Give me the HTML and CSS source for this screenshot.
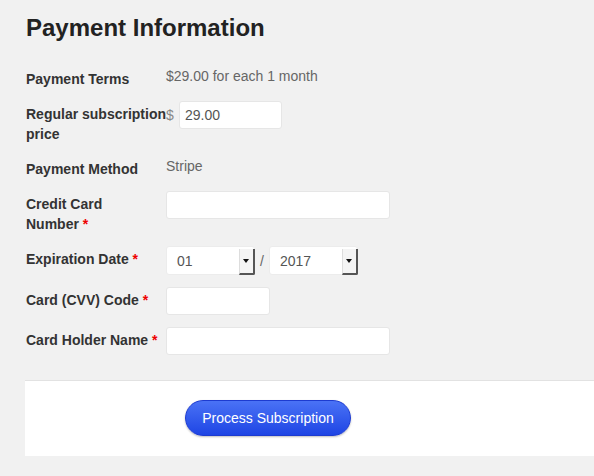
FILE: index.html
```html
<!DOCTYPE html>
<html lang="en">
<head>
    <meta charset="UTF-8">
    <title>Payment Information</title>
    <link rel="stylesheet" href="styles.css">
</head>
<body>
    <div class="page">
        <h2>Payment Information</h2>

        <!-- Payment fields -->
        <div class="row">
            <div class="label">Payment Terms</div>
            <div class="value">$29.00 for each 1 month</div>
        </div>

        <div class="row">
            <div class="label">Regular&nbsp;subscription price</div>
            <div class="field">
                <span class="currency">$</span>
                <input type="text" class="input price" value="29.00">
            </div>
        </div>

        <div class="row">
            <div class="label">Payment Method</div>
            <div class="value">Stripe</div>
        </div>

        <div class="row">
            <div class="label">Credit Card <span class="nowrap">Number <span class="req">*</span></span></div>
            <div class="field"><input type="text" class="input wide"></div>
        </div>

        <div class="row">
            <div class="label">Expiration Date <span class="req">*</span></div>
            <div class="field">
                <span class="select-wrap">
                    <select class="select"><option>01</option></select>
                </span>
                <span class="slash">/</span>
                <span class="select-wrap">
                    <select class="select"><option>2017</option></select>
                </span>
            </div>
        </div>

        <div class="row">
            <div class="label">Card (CVV) Code <span class="req">*</span></div>
            <div class="field"><input type="text" class="input short"></div>
        </div>

        <div class="row">
            <div class="label">Card Holder Name <span class="req">*</span></div>
            <div class="field"><input type="text" class="input wide"></div>
        </div>

        <!-- Submit -->
        <div class="actions">
            <button class="btn">Process Subscription</button>
        </div>
    </div>
</body>
</html>
```

FILE: styles.css
```css
/* General Styles */
body {
    margin: 0;
    padding: 0;
    background: #f1f1f1;
    font-family: 'Liberation Sans', Arial, sans-serif;
    font-size: 14px;
    color: #333;
    overflow: hidden;
}

.page {
    padding-left: 26px;
}

h2 {
    margin: 14px 0 24px;
    font-size: 24px;
    line-height: 28px;
    font-weight: bold;
    color: #222;
}

.row {
    display: grid;
    grid-template-columns: 140px 1fr;
    align-items: start;
    margin-bottom: 12px;
}

.label {
    padding-top: 3px;
    line-height: 20px;
    font-weight: bold;
    color: #333;
}

.nowrap {
    white-space: nowrap;
}

.req {
    color: #e00;
}

.value {
    line-height: 20px;
    color: #666;
}

.field {
    display: flex;
    align-items: center;
}

.currency {
    color: #888;
    width: 13px;
}

.input {
    box-sizing: border-box;
    height: 28px;
    padding: 0 5px;
    border: 1px solid #e6e6e6;
    border-radius: 3px;
    background: #fff;
    font-family: inherit;
    font-size: 14px;
    color: #555;
    outline: none;
}

.price {
    width: 103px;
}

.wide {
    width: 224px;
}

.short {
    width: 104px;
}

/* Fake native dropdown */
.select-wrap {
    position: relative;
    display: inline-block;
}

.select {
    appearance: none;
    -webkit-appearance: none;
    box-sizing: border-box;
    width: 89px;
    height: 29px;
    padding: 0 10px;
    border: 1px solid #ececec;
    border-radius: 3px;
    background: #fff;
    font-family: inherit;
    font-size: 14px;
    color: #555;
    outline: none;
}

.select-wrap::after {
    content: "";
    position: absolute;
    right: 0;
    top: 3px;
    bottom: 0;
    width: 13px;
    background: #f4f4f4;
    border-left: 1px solid #ddd;
    border-right: 2px solid #555;
    border-bottom: 2px solid #555;
    border-radius: 0 0 2px 0;
}

.select-wrap::before {
    content: "";
    position: absolute;
    right: 6px;
    top: 13px;
    z-index: 1;
    border-left: 3px solid transparent;
    border-right: 3px solid transparent;
    border-top: 4px solid #111;
}

.slash {
    width: 14px;
    text-align: center;
    color: #666;
}

.actions {
    margin: 25px -20px 0 -1px;
    padding: 19px 0 20px 160px;
    background: #fff;
    border-top: 1px solid #e2e2e2;
}

.btn {
    box-sizing: border-box;
    width: 166px;
    height: 36px;
    border: 1px solid #1d3bd0;
    border-radius: 18px;
    background: linear-gradient(#4a72f5, #1e45e4);
    box-shadow: 0 1px 2px rgba(0, 0, 0, 0.25);
    font-family: inherit;
    font-size: 14px;
    color: #fff;
    cursor: pointer;
}
```
